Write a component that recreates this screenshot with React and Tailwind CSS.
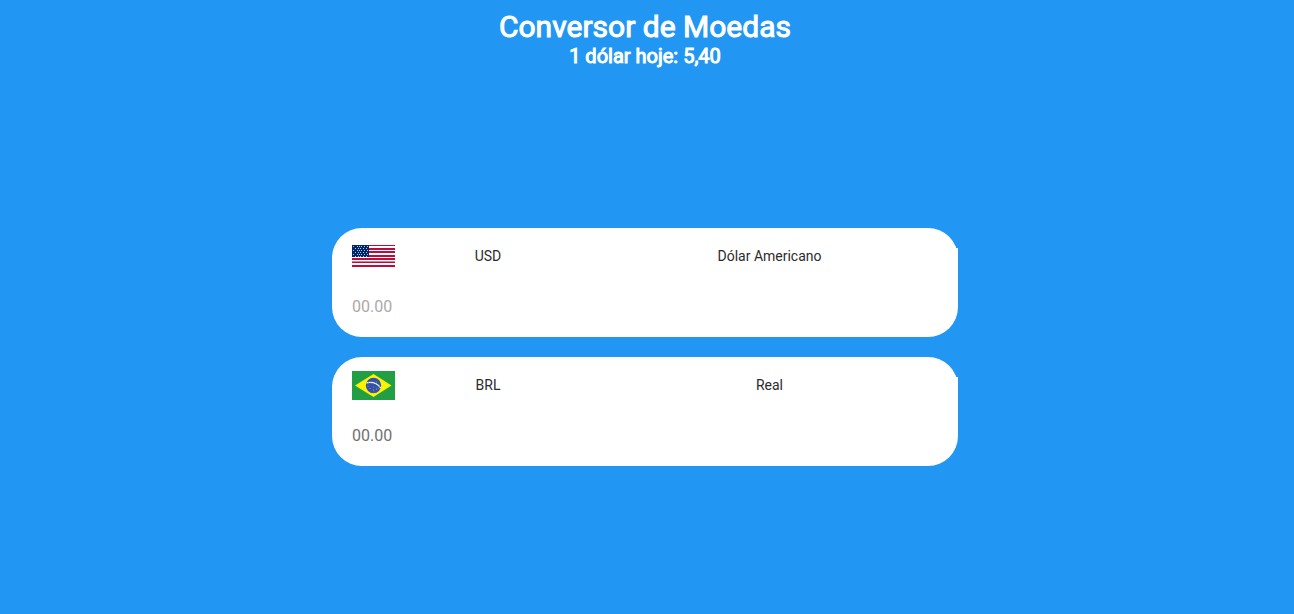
import { useState } from "react";

const STRIPES = [
  [0, 1, "#bf0a3a"],
  [3, 2, "#bf0a3a"],
  [6, 2, "#bf0a3a"],
  [10, 2, "#bf0a3a"],
  [13, 2, "#bf0a3a"],
  [16, 1, "#d97a90"],
  [17, 1, "#bf0a3a"],
  [20, 2, "#bf0a3a"],
];
const STAR_ROWS = [1, 3, 5, 7, 9, 11];

function UsaFlag() {
  return (
    <svg width="43" height="22" viewBox="0 0 43 22" shapeRendering="crispEdges" role="img" aria-label="Estados Unidos">
      <rect width="43" height="22" fill="#fff" />
      {STRIPES.map(([y, height, color]) => (
        <rect key={y} y={y} width="43" height={height} fill={color} />
      ))}
      <rect width="17" height="12" fill="#002868" />
      {STAR_ROWS.map((y, row) =>
        (row % 2 ? [3, 6, 8, 11, 14] : [1, 5, 7, 9, 12, 15]).map((x) => (
          <rect key={`${x}-${y}`} x={x} y={y} width="1" height="1" fill="#b9c6da" />
        ))
      )}
    </svg>
  );
}

function BrazilFlag() {
  return (
    <svg width="43" height="29" viewBox="0 0 43 29" role="img" aria-label="Brasil">
      <rect width="43" height="29" fill="#229e45" />
      <path d="M3 14.5 21.5 3 39.5 14.5 21.5 26Z" fill="#fff200" />
      <circle cx="21.5" cy="14.5" r="7.7" fill="#3450a8" />
      <path d="M14.6 11.8C20 10.8 25.5 12.6 28.7 17" fill="none" stroke="#fff" strokeWidth="1.2" />
      <path d="M16 11.8C20.5 11.5 25 13 28 16" fill="none" stroke="#309e3a" strokeWidth="0.7" strokeDasharray="1 1.4" />
      <g fill="#fff" opacity="0.6">
        <circle cx="24.5" cy="11" r="0.4" />
        <circle cx="16" cy="15" r="0.5" />
        <circle cx="18" cy="17.5" r="0.5" />
        <circle cx="21.5" cy="16" r="0.4" />
        <circle cx="21.5" cy="19" r="0.5" />
        <circle cx="24.5" cy="18" r="0.5" />
        <circle cx="26.5" cy="17.5" r="0.4" />
        <circle cx="22" cy="21" r="0.4" />
      </g>
    </svg>
  );
}

function CurrencyCard({ id, code, name, flag, tone, value, onChange }) {
  return (
    <section className="rounded-[30px] bg-white pb-[18px]">
      <label htmlFor={id} className="flex h-14 items-center pl-5 text-sm leading-4 text-[#2b2b2b]">
        <span className="shrink-0">{flag}</span>
        <span className="w-[186px] text-center">{code}</span>
        <span className="min-w-0 flex-1 bg-white text-center">{name}</span>
      </label>
      <div className="px-5 pt-[10px]">
        <input
          id={id}
          type="text"
          inputMode="decimal"
          placeholder="00.00"
          value={value}
          onChange={onChange}
          className={`block h-[25px] w-full bg-transparent text-base outline-none ${tone}`}
        />
      </div>
    </section>
  );
}

export default function App() {
  const rate = 5.4;
  const [usd, setUsd] = useState("");
  const [brl, setBrl] = useState("");

  const convert = (setOwn, setOther, factor) => (event) => {
    const text = event.target.value;
    const amount = parseFloat(text.replace(",", "."));
    setOwn(text);
    setOther(Number.isNaN(amount) ? "" : (amount * factor).toFixed(2));
  };

  return (
    <div className="flex min-h-screen flex-col bg-[#2196f3] pt-[9px] pr-1 font-['Roboto',sans-serif]">
      <header className="text-center text-white [-webkit-text-stroke:1px_white]">
        <h1 className="text-[30px] leading-9 font-normal">Conversor de Moedas</h1>
        <p className="text-xl leading-[23px] font-normal">1 dólar hoje: 5,40</p>
      </header>
      <main className="flex flex-1 flex-col items-center justify-center px-4 pt-3">
        <div className="flex w-full max-w-[626px] flex-col gap-5">
          <CurrencyCard
            id="usd"
            code="USD"
            name="Dólar Americano"
            flag={<UsaFlag />}
            tone="text-[#616161] placeholder:text-[#aaaaaa]"
            value={usd}
            onChange={convert(setUsd, setBrl, rate)}
          />
          <CurrencyCard
            id="brl"
            code="BRL"
            name="Real"
            flag={<BrazilFlag />}
            tone="text-[#616161] placeholder:text-[#707070]"
            value={brl}
            onChange={convert(setBrl, setUsd, 1 / rate)}
          />
        </div>
      </main>
    </div>
  );
}
